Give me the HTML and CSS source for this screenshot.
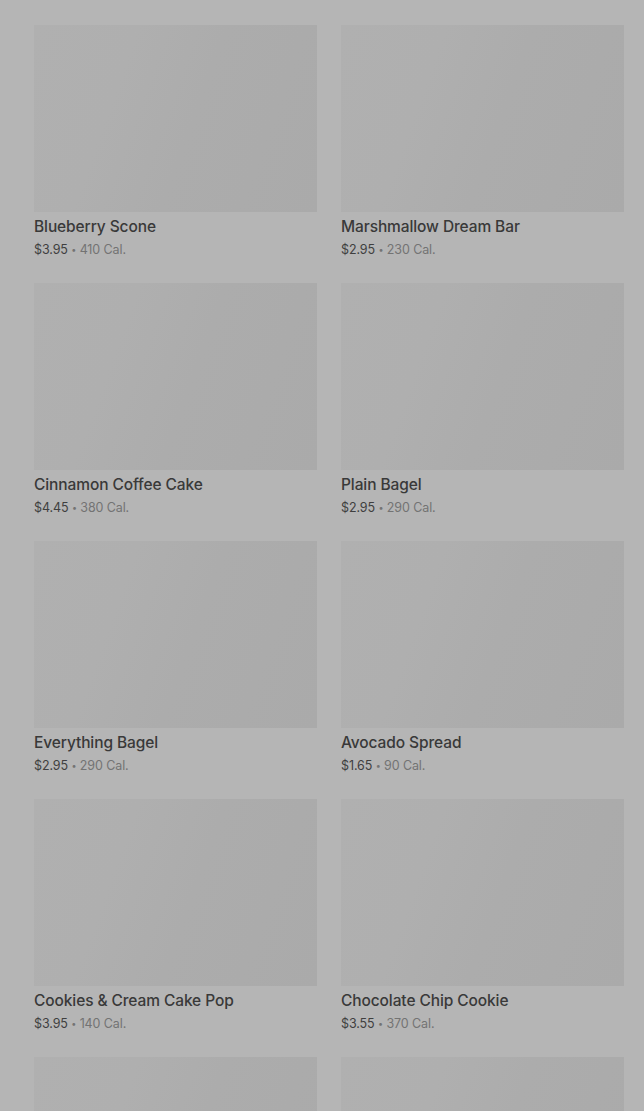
FILE: index.html
```html
<!DOCTYPE html>
<html lang="en">
<head>
    <meta charset="UTF-8">
    <meta name="viewport" content="width=device-width, initial-scale=1.0">
    <title>Bakery</title>
    <link rel="stylesheet" href="styles.css">
</head>

<body>
    <div class="menu-grid">
        <div class="item">
            <div class="item-image"></div>
            <h3>Blueberry Scone</h3>
            <p><span class="price">$3.95</span> <span class="dot">•</span> 410 Cal.</p>
        </div>
        <div class="item">
            <div class="item-image"></div>
            <h3>Marshmallow Dream Bar</h3>
            <p><span class="price">$2.95</span> <span class="dot">•</span> 230 Cal.</p>
        </div>
        <div class="item">
            <div class="item-image"></div>
            <h3>Cinnamon Coffee Cake</h3>
            <p><span class="price">$4.45</span> <span class="dot">•</span> 380 Cal.</p>
        </div>
        <div class="item">
            <div class="item-image"></div>
            <h3>Plain Bagel</h3>
            <p><span class="price">$2.95</span> <span class="dot">•</span> 290 Cal.</p>
        </div>
        <div class="item">
            <div class="item-image"></div>
            <h3>Everything Bagel</h3>
            <p><span class="price">$2.95</span> <span class="dot">•</span> 290 Cal.</p>
        </div>
        <div class="item">
            <div class="item-image"></div>
            <h3>Avocado Spread</h3>
            <p><span class="price">$1.65</span> <span class="dot">•</span> 90 Cal.</p>
        </div>
        <div class="item">
            <div class="item-image"></div>
            <h3>Cookies &amp; Cream Cake Pop</h3>
            <p><span class="price">$3.95</span> <span class="dot">•</span> 140 Cal.</p>
        </div>
        <div class="item">
            <div class="item-image"></div>
            <h3>Chocolate Chip Cookie</h3>
            <p><span class="price">$3.55</span> <span class="dot">•</span> 370 Cal.</p>
        </div>
        <!-- next row, still loading -->
        <div class="item">
            <div class="item-image"></div>
        </div>
        <div class="item">
            <div class="item-image"></div>
        </div>
    </div>
</body>

</html>
```

FILE: styles.css
```css
body {
    font-family: Inter, "Noto Sans", Arial, sans-serif;
    background-color: #b5b5b5;
    margin: 0;
    padding: 0;
}

.menu-grid {
    display: grid;
    grid-template-columns: 283px 283px;
    column-gap: 24px;
    row-gap: 24px;
    padding: 25px 20px 0 34px;
}

.item-image {
    height: 187px;
    background: linear-gradient(110deg, #b0b0b0 0%, #afafaf 30%, #acacac 55%, #aaaaaa 100%);
}

.item h3 {
    margin: 5px 0 0;
    font-size: 15.5px;
    line-height: 20px;
    font-weight: 500;
    letter-spacing: -0.1px;
    color: #393939;
}

.item p {
    margin: 4px 0 0;
    font-size: 12.5px;
    line-height: 18px;
    letter-spacing: -0.1px;
    color: #737373;
}

.price {
    color: #3f3f3f;
}

.dot {
    font-size: 9px;
    vertical-align: 1px;
}
```
